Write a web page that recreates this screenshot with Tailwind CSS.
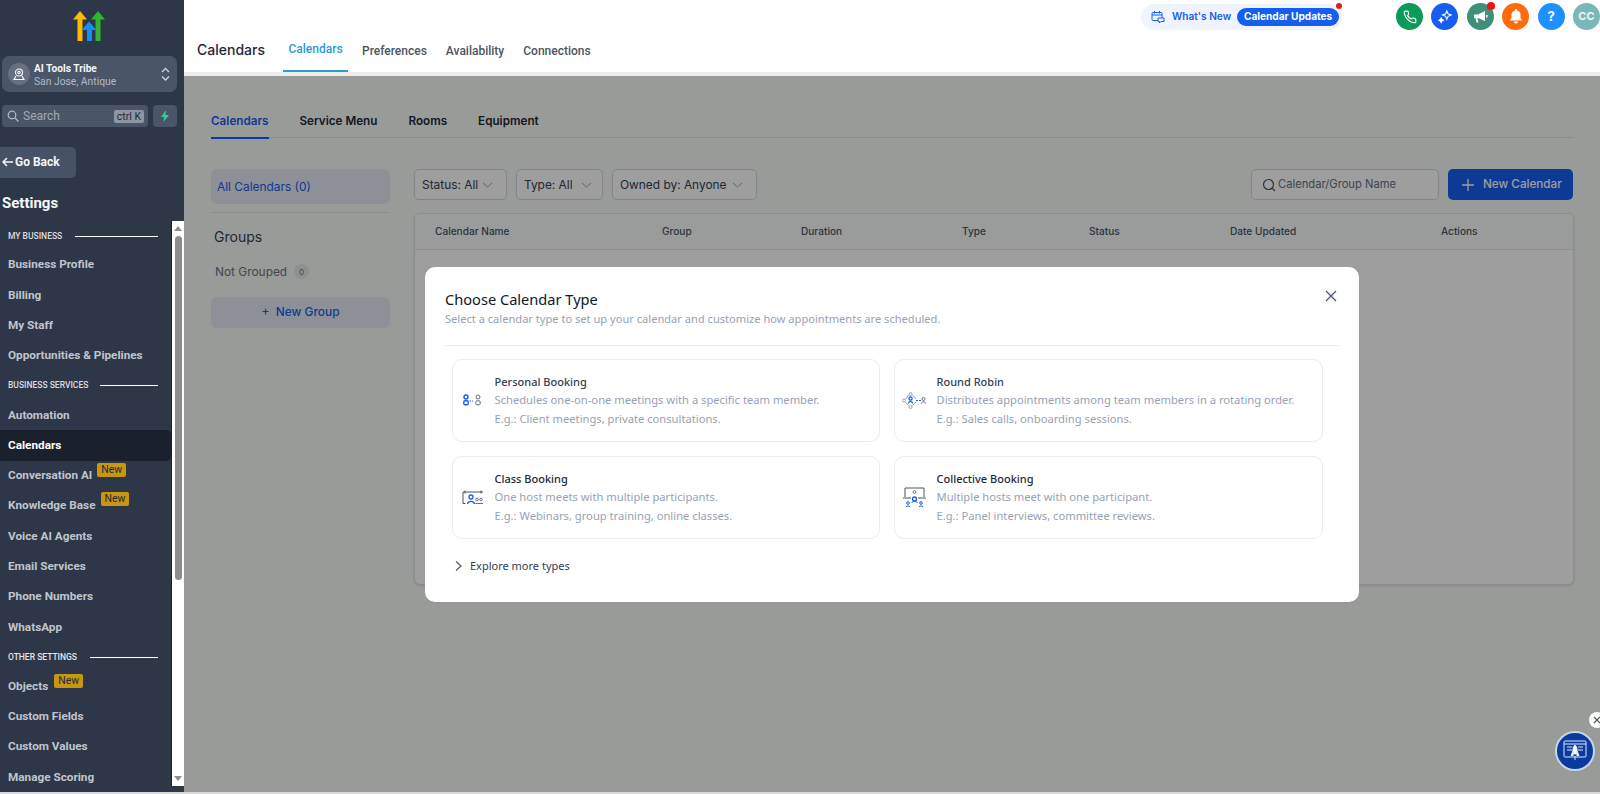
<!DOCTYPE html>
<html><head><meta charset="utf-8"><script src="https://cdn.jsdelivr.net/npm/@tailwindcss/browser@4"></script></head>
<body class="m-0 w-[1600px] h-[794px] overflow-hidden bg-[#d9d9d9] font-['Inter',sans-serif]">
<div class="flex h-[792px]">
<!-- Sidebar -->
<aside class="w-[184px] h-full shrink-0 bg-[#2d3748] flex flex-col font-['Roboto',sans-serif] text-white">
  <div class="h-[56px] flex justify-center pt-[11px] pr-[4px]">
    <svg width="36" height="31" viewBox="0 0 36 31"><path d="M1 8.500 8 0l7 8.500h-4.500V30h-5V8.500z" fill="#fbbc05"/><path d="M19 8.500 26 0l7 8.500h-4.500V30h-5V8.500z" fill="#2fb52f"/><path d="M9.500 19 17 10.500 24.500 19H20v11h-5V19z" fill="#188bf6"/></svg>
  </div>
  <div class="mx-[2px] w-[175px] h-[36px] rounded-[7px] bg-[#4a5568] flex items-center pl-[6px] pr-[7px]">
    <div class="w-[22px] h-[22px] rounded-full bg-[#667080] flex items-center justify-center mr-[4px]">
      <svg width="12" height="13" viewBox="0 0 12 13" fill="none" stroke="#fff" stroke-width="1.100"><circle cx="6" cy="4.500" r="3.500"/><circle cx="6" cy="4.500" r="1.200"/><path d="M3 8 1 11.500h10L9 8"/></svg>
    </div>
    <div class="flex-1 leading-[13px] pt-[1px]">
      <div class="text-[10.200px] font-bold text-[#f4f5f7]">AI Tools Tribe</div>
      <div class="text-[10.300px] text-[#b4bac4]">San Jose, Antique</div>
    </div>
    <svg width="9" height="14" viewBox="0 0 9 14" fill="none" stroke="#d0d4da" stroke-width="1.300"><path d="M1 5l3.500-3.500L8 5M1 9.500 4.500 13 8 9.500"/></svg>
  </div>
  <div class="mt-[13px] flex items-center gap-[5px] pl-[2px]">
    <div class="w-[146px] h-[22px] rounded-[4px] bg-[#4a5568] flex items-center pl-[5px] pr-[4px]">
      <svg width="12" height="12" viewBox="0 0 12 12" fill="none" stroke="#b4bac4" stroke-width="1.200"><circle cx="5" cy="5" r="3.800"/><path d="m8 8 3.500 3.500"/></svg>
      <span class="ml-[4px] text-[12px] flex-1 text-[#a4abb6]">Search</span>
      <span class="bg-[#8e96a3] text-[#1f2937] text-[10.500px] leading-[13px] px-[3px] rounded-[2px]">ctrl K</span>
    </div>
    <div class="w-[24px] h-[22px] rounded-[4px] bg-[#4a5568] flex items-center justify-center">
      <svg width="10" height="12" viewBox="0 0 10 12"><path d="M6 0 1 7h3L3.500 12 9 5H5.500z" fill="#37ca8f"/></svg>
    </div>
  </div>
  <div class="mt-[20px] w-[76px] h-[31px] rounded-r-[5px] bg-[#465367] flex items-center pl-[2px] pb-[1px] text-[12px] font-bold text-[#f4f5f7]">
    <svg width="11" height="10" viewBox="0 0 11 10" fill="none" stroke="#f4f5f7" stroke-width="1.500" class="mr-[2px]"><path d="M5 1 1 5l4 4M1 5h10"/></svg>Go Back
  </div>
  <div class="mt-[15px] h-[20px] pl-[2px] text-[15px] font-bold leading-[20px] text-[#f7f8f9]">Settings</div>
  <div class="mt-[8px] flex h-[565px] text-[#c0c5cc] text-[11.750px] font-bold">
    <nav class="w-[171px] overflow-hidden pt-[1px]">
      <div class="h-[28px] flex items-center pl-[8px] pr-[13px] gap-[13px] text-[8.500px] font-medium text-[#d9dce1]"><span class="whitespace-nowrap">MY BUSINESS</span><span class="flex-1 h-px bg-white"></span></div>
      <div class="h-[30.300px] flex items-center pl-[8px]">Business Profile</div>
      <div class="h-[30.300px] flex items-center pl-[8px]">Billing</div>
      <div class="h-[30.300px] flex items-center pl-[8px]">My Staff</div>
      <div class="h-[30.300px] flex items-center pl-[8px]">Opportunities &amp; Pipelines</div>
      <div class="h-[29px] flex items-center pl-[8px] pr-[13px] gap-[12px] text-[8.500px] font-medium text-[#d9dce1]"><span class="whitespace-nowrap">BUSINESS SERVICES</span><span class="flex-1 h-px bg-white"></span></div>
      <div class="h-[30.300px] flex items-center pl-[8px]">Automation</div>
      <div class="h-[30.300px] flex items-center pl-[8px] bg-[#1a202c] rounded-r-[5px] text-white">Calendars</div>
      <div class="h-[30.300px] flex items-center pl-[8px]">Conversation AI<span class="ml-[5px] -mt-[11px] h-[14px] px-[4px] rounded-[2px] bg-[#c9970f] text-[#1f2937] text-[10.500px] font-normal leading-[14px]">New</span></div>
      <div class="h-[30.300px] flex items-center pl-[8px]">Knowledge Base<span class="ml-[5px] -mt-[14px] h-[14px] px-[4px] rounded-[2px] bg-[#c9970f] text-[#1f2937] text-[10.500px] font-normal leading-[14px]">New</span></div>
      <div class="h-[30.300px] flex items-center pl-[8px]">Voice AI Agents</div>
      <div class="h-[30.300px] flex items-center pl-[8px]">Email Services</div>
      <div class="h-[30.300px] flex items-center pl-[8px]">Phone Numbers</div>
      <div class="h-[30.300px] flex items-center pl-[8px]">WhatsApp</div>
      <div class="h-[29px] flex items-center pl-[8px] pr-[13px] gap-[13px] text-[8.500px] font-medium text-[#e4e6ea]"><span class="whitespace-nowrap">OTHER SETTINGS</span><span class="flex-1 h-px bg-white"></span></div>
      <div class="h-[30.300px] flex items-center pl-[8px]">Objects<span class="ml-[6px] -mt-[12px] h-[14px] px-[4px] rounded-[2px] bg-[#c9970f] text-[#1f2937] text-[10.500px] font-normal leading-[14px]">New</span></div>
      <div class="h-[30.300px] flex items-center pl-[8px]">Custom Fields</div>
      <div class="h-[30.300px] flex items-center pl-[8px]">Custom Values</div>
      <div class="h-[30.300px] flex items-center pl-[8px]">Manage Scoring</div>
    </nav>
    <div class="w-[13px] h-full bg-white flex flex-col items-center pt-[5px] border-l border-[#1a202c]">
      <span class="w-0 h-0 border-x-[4px] border-x-transparent border-b-[5px] border-b-[#8f8f8f]"></span>
      <span class="mt-[5px] w-[7px] h-[344px] rounded-[4px] bg-[#8c8c8c]"></span>
      <span class="mt-auto mb-[5px] w-0 h-0 border-x-[4px] border-x-transparent border-t-[5px] border-t-[#8f8f8f]"></span>
    </div>
  </div>
</aside>
<div class="flex-1 flex flex-col min-w-0 relative">
  <!-- Header -->
  <header class="h-[76px] shrink-0 bg-white border-b-[4px] border-[#ececec] relative">
    <div class="flex h-[26px] mt-[4px] absolute left-[957px] top-0 w-[201px] rounded-full bg-[#eff4ff] items-center pl-[10px] text-[10.100px] font-semibold text-[#155eef] whitespace-nowrap">
      <svg width="14" height="14" viewBox="0 0 14 14" fill="none" stroke="#155eef" stroke-width="1"><rect x="1" y="2.500" width="10" height="8" rx="1"/><path d="M1 5h10M3.500 1v2.500M8.500 1v2.500"/><path d="M7 8h6v3.500H10L8.500 13v-1.500H7z" fill="#eff4ff"/></svg>
      <span class="ml-[7px]">What's New</span>
      <span class="ml-[6px] h-[18px] w-[102px] rounded-full bg-[#155eef] text-white font-bold flex items-center justify-center">Calendar Updates</span>
      <span class="absolute right-[0px] top-[-1px] w-[6px] h-[6px] rounded-full bg-[#d92020]"></span>
    </div>
    <div class="absolute left-[1212px] top-[3px] flex gap-[8.400px]">
      <div class="w-[27px] h-[27px] rounded-full bg-[#0b9a58] flex items-center justify-center"><svg width="14" height="14" viewBox="0 0 24 24" fill="none" stroke="#fff" stroke-width="2"><path d="M22 16.900v3a2 2 0 0 1-2.200 2 19.800 19.800 0 0 1-8.600-3.100 19.500 19.500 0 0 1-6-6A19.800 19.800 0 0 1 2.100 4.200 2 2 0 0 1 4.100 2h3a2 2 0 0 1 2 1.700l.5 2.800a2 2 0 0 1-.6 1.800L7.800 9.600a16 16 0 0 0 6 6l1.300-1.200a2 2 0 0 1 1.800-.6l2.800.5a2 2 0 0 1 1.700 2z"/></svg></div>
      <div class="w-[27px] h-[27px] rounded-full bg-[#155eef] flex items-center justify-center"><svg width="15" height="15" viewBox="0 0 16 16" fill="none" stroke="#fff" stroke-width="1.200"><path d="M10.500 2 11.800 5.200 15 6.500 11.800 7.800 10.500 11 9.200 7.800 6 6.500 9.200 5.200z"/><path d="M4.500 9.500l.9 1.600 1.600.9-1.600.9-.9 1.600-.9-1.600L2 12l1.600-.9z" fill="#fff"/></svg></div>
      <div class="relative w-[27px] h-[27px] rounded-full bg-[#3f9079] flex items-center justify-center"><svg width="15" height="14" viewBox="0 0 15 14" fill="#fff"><path d="M1 4.500h4L12 1v10L5 8H4.500l1 4.500h-2L2.500 8H1z"/><rect x="13" y="5" width="1.500" height="2.500"/></svg><span class="absolute right-[-1px] top-[-1px] w-[8px] h-[8px] rounded-full bg-[#f30f0f]"></span></div>
      <div class="w-[27px] h-[27px] rounded-full bg-[#ff6a0b] flex items-center justify-center"><svg width="14" height="15" viewBox="0 0 14 15" fill="#fff"><path d="M7 0a1 1 0 0 1 1 1v.6A4.500 4.500 0 0 1 11.500 6v3L13 11.500H1L2.500 9V6A4.500 4.500 0 0 1 6 1.600V1a1 1 0 0 1 1-1zM5 12.500h4a2 2 0 0 1-4 0z"/></svg></div>
      <div class="w-[27px] h-[27px] rounded-full bg-[#1e90ff] flex items-center justify-center text-white text-[13px] font-bold">?</div>
      <div class="w-[27px] h-[27px] rounded-full bg-[#7ab8b8] flex items-center justify-center text-[#eef6f6] text-[11px] font-bold">CC</div>
    </div>
    <div class="flex items-center h-[72px] pt-[27px] pl-[13px]">
      <span class="text-[14px] font-medium text-[#1f2937] w-[86px]">Calendars</span>
      <div class="flex h-[45px] text-[12px] font-medium text-[#4b5563] font-['Roboto',sans-serif]">
        <span class="h-full w-[65px] justify-center flex items-center pt-[1px] border-b-2 border-[#2b9ad8] text-[#2b9ad8]">Calendars</span>
        <span class="ml-[14px] flex items-center pt-[2px]">Preferences</span>
        <span class="ml-[19px] flex items-center pt-[2px]">Availability</span>
        <span class="ml-[19px] flex items-center pt-[2px]">Connections</span>
      </div>
    </div>
  </header>
  <!-- Main -->
  <main class="flex-1 relative bg-[#f7faf7] px-[27px] pt-[37px] pr-[26px]">
    <div class="flex h-[25px] border-b border-[#dfe3ea] text-[11.700px] font-semibold text-[#1f2937] gap-[31px]">
      <span class="border-b-2 border-[#155eef] text-[#155eef] h-[26px]">Calendars</span>
      <span>Service Menu</span><span>Rooms</span><span>Equipment</span>
    </div>
    <div class="flex mt-[31px]">
      <div class="w-[179px] shrink-0">
        <div class="h-[35px] rounded-[6px] bg-[#e6e9f5] flex items-center pl-[6px] text-[11.900px] text-[#155eef]">All Calendars (0)</div>
        <div class="mt-[8px] h-px bg-[#e5e7eb]"></div>
        <div class="mt-[14px] pl-[3px] text-[14px] text-[#374151] leading-[20px]">Groups</div>
        <div class="mt-[16px] pl-[4px] flex items-center text-[11.900px] text-[#6b7280]">Not Grouped<span class="ml-[7px] w-[15px] h-[15px] rounded-full bg-[#e5e7eb] text-[8px] flex items-center justify-center">0</span></div>
        <div class="mt-[16px] h-[31px] rounded-[6px] bg-[#e6e9f5] flex items-center justify-center text-[11.900px] font-medium text-[#155eef]">+ &nbsp;New Group</div>
      </div>
      <div class="ml-[24px] flex-1 min-w-0">
        <div class="flex h-[31px] text-[11.900px] text-[#374151] gap-[9px]">
          <div class="w-[93px] rounded-[5px] border border-[#d0d5dd] bg-white flex items-center justify-between pl-[7px] pr-[13px]">Status: All<svg width="11" height="6" viewBox="0 0 11 6" fill="none" stroke="#98a2b3"><path d="m1 1 4.500 4L10 1"/></svg></div>
          <div class="w-[87px] rounded-[5px] border border-[#d0d5dd] bg-white flex items-center justify-between pl-[7px] pr-[10px]">Type: All<svg width="11" height="6" viewBox="0 0 11 6" fill="none" stroke="#98a2b3"><path d="m1 1 4.500 4L10 1"/></svg></div>
          <div class="w-[145px] rounded-[5px] border border-[#d0d5dd] bg-white flex items-center justify-between pl-[7px] pr-[13px]">Owned by: Anyone<svg width="11" height="6" viewBox="0 0 11 6" fill="none" stroke="#98a2b3"><path d="m1 1 4.500 4L10 1"/></svg></div>
          <div class="ml-auto w-[188px] rounded-[5px] border border-[#d0d5dd] bg-white flex items-center pl-[10px] text-[11.200px] text-[#667085]"><svg width="14" height="14" viewBox="0 0 14 14" fill="none" stroke="#475467" stroke-width="1.200"><circle cx="6.500" cy="6.500" r="5"/><path d="m10.200 10.200 2.800 2.800"/></svg><span class="ml-[2px]">Calendar/Group Name</span></div>
          <div class="w-[125px] mr-[1px] rounded-[5px] bg-[#155eef] flex items-center pl-[14px] text-[11.700px] text-white font-medium"><svg width="12" height="12" viewBox="0 0 12 12" stroke="#fff" stroke-width="1.300"><path d="M6 0v12M0 6h12"/></svg><span class="ml-[9px]">New Calendar</span></div>
        </div>
        <div class="mt-[13px] h-[372px] rounded-[6px] border border-[#e0e3e8] bg-white shadow-sm overflow-hidden">
          <div class="h-[36px] bg-[#f9fafb] border-b border-[#e5e7eb] pl-[20px] grid grid-cols-[227px_139px_161px_127px_141px_211px_1fr] items-center text-[10.100px] font-medium text-[#475467]">
            <span>Calendar Name</span><span>Group</span><span>Duration</span><span>Type</span><span>Status</span><span>Date Updated</span><span>Actions</span>
          </div>
        </div>
      </div>
    </div>
    <!-- Overlay -->
    <div class="absolute inset-0 bg-[#000]/38"></div>
    <!-- Modal -->
    <div class="absolute left-[241px] top-[191px] w-[934px] h-[335px] rounded-[10px] bg-white px-[20px] pt-[22px] font-['Noto_Sans',sans-serif]">
      <div class="text-[14.600px] leading-[20px] text-[#101828]">Choose Calendar Type</div>
      <div class="mt-[2px] text-[11.100px] leading-[16px] text-[#98a2b3]">Select a calendar type to set up your calendar and customize how appointments are scheduled.</div>
      <svg class="absolute right-[22px] top-[23px]" width="12" height="12" viewBox="0 0 12 12" stroke="#475467" stroke-width="1.200"><path d="m1 1 10 10M11 1 1 11"/></svg>
      <div class="mt-[18px] h-px bg-[#eaecf0]"></div>
      <div class="ml-[7px] mt-[13px] grid grid-cols-[428px_429px] gap-x-[14px] gap-y-[14px]">
        <div class="h-[83px] rounded-[10px] border border-[#eaecf0] flex items-center pl-[9px]">
          <svg class="w-[21px] h-[21px] shrink-0" viewBox="0 0 21 21" fill="none"><g stroke="#155eef" stroke-width="1.400"><circle cx="4" cy="7" r="2"/><rect x="1.800" y="10.800" width="4.400" height="4" rx="1.200"/><path d="M7.500 11h3.500" stroke-width="1" stroke-dasharray="1.500 1"/></g><g stroke="#667085" stroke-width="1"><circle cx="16" cy="7" r="2"/><rect x="13.800" y="10.800" width="4.400" height="4" rx="1"/></g></svg>
          <div class="ml-[11.500px] text-[11.200px] leading-[18.300px] text-[#98a2b3]"><div class="text-[#344054] text-[11px] font-medium">Personal Booking</div><div>Schedules one-on-one meetings with a specific team member.</div><div>E.g.: Client meetings, private consultations.</div></div>
        </div>
        <div class="h-[83px] rounded-[10px] border border-[#eaecf0] flex items-center pl-[7px]">
          <svg class="w-[25px] h-[21px] shrink-0" viewBox="0 0 25 21" fill="none"><circle cx="8.500" cy="4" r="1.500" stroke="#98a2b3"/><circle cx="8.500" cy="17" r="1.500" stroke="#98a2b3"/><circle cx="2" cy="10.500" r="1.500" stroke="#98a2b3"/><path d="M10.500 5 14 9M6.500 5 3.500 9M3.500 12l3 3.500M14 12l-3.500 3.500" stroke="#98a2b3"/><circle cx="8.500" cy="8.500" r="1.600" stroke="#155eef" stroke-width="1.300"/><path d="M6.300 13.500c.5-2.800 4-2.800 4.400 0" stroke="#155eef" stroke-width="1.300"/><path d="M14 10.500h5" stroke="#155eef" stroke-dasharray="2 1"/><circle cx="21.500" cy="9" r="1.500" stroke="#667085"/><path d="M19.500 13.500c.4-2.500 3.600-2.500 4 0" stroke="#667085"/></svg>
          <div class="ml-[9.500px] text-[11.200px] leading-[18.300px] text-[#98a2b3]"><div class="text-[#344054] text-[11px] font-medium">Round Robin</div><div>Distributes appointments among team members in a rotating order.</div><div>E.g.: Sales calls, onboarding sessions.</div></div>
        </div>
        <div class="h-[83px] rounded-[10px] border border-[#eaecf0] flex items-center pl-[9px]">
          <svg class="w-[22px] h-[21px] shrink-0" viewBox="0 0 22 21" fill="none" stroke-width="1"><path d="M3.500 16.500H1V5h20" stroke="#475467"/><path d="M3 3.500v3M19 3.500v3" stroke="#475467"/><circle cx="9" cy="10" r="2" stroke="#155eef" stroke-width="1.300"/><path d="M5.500 17c.5-3.500 6.500-3.500 7 0" stroke="#155eef" stroke-width="1.300"/><circle cx="15" cy="12.500" r="1.300" stroke="#667085"/><circle cx="19" cy="12.500" r="1.300" stroke="#667085"/><path d="M13.500 16.500H21" stroke="#667085"/></svg>
          <div class="ml-[10.500px] text-[11.200px] leading-[18.300px] text-[#98a2b3]"><div class="text-[#1d2939] text-[11px] font-medium">Class Booking</div><div>One host meets with multiple participants.</div><div>E.g.: Webinars, group training, online classes.</div></div>
        </div>
        <div class="h-[83px] rounded-[10px] border border-[#eaecf0] flex items-center pl-[7px]">
          <svg class="w-[25px] h-[21px] shrink-0" viewBox="0 0 25 21" fill="none" stroke-width="1"><path d="M3 10V1h19v9" stroke="#475467"/><path d="M1 11h8M16 11h8" stroke="#475467"/><circle cx="12.500" cy="5" r="1.400" stroke="#667085"/><circle cx="12.500" cy="12" r="2" stroke="#155eef" stroke-width="1.300"/><path d="M9.500 16c.5-2 5.500-2 6 0" stroke="#155eef"/><circle cx="6" cy="16" r="1.300" stroke="#155eef"/><circle cx="19" cy="16" r="1.300" stroke="#155eef"/><path d="M4 20c.4-1.500 3.600-1.500 4 0M17 20c.4-1.500 3.600-1.500 4 0" stroke="#155eef"/></svg>
          <div class="ml-[9.500px] text-[11.200px] leading-[18.300px] text-[#98a2b3]"><div class="text-[#1d2939] text-[11px] font-medium">Collective Booking</div><div>Multiple hosts meet with one participant.</div><div>E.g.: Panel interviews, committee reviews.</div></div>
        </div>
      </div>
      <div class="mt-[19px] ml-[9px] flex items-center text-[11px] text-[#344054]"><svg width="9" height="12" viewBox="0 0 9 12" fill="none" stroke="#475467" stroke-width="1.100"><path d="m2 1.500 5 4.500-5 4.500"/></svg><span class="ml-[7px]">Explore more types</span></div>
    </div>
    <!-- Floating widget -->
    <div class="absolute left-[1371px] top-[655px] w-[40px] h-[40px] rounded-full bg-[#0a3a9e] border-2 border-[#c7d4ea] flex items-center justify-center">
      <svg width="28" height="28" viewBox="0 0 28 28" fill="none" stroke="#dbe6f7" stroke-width="1"><rect x="3" y="4" width="22" height="16" rx="1"/><path d="M3 7h22M6 10h5M6 13h5M17 10h5M17 13h5"/><path d="M14 8c2.500 2 2.500 6 1.500 9h-3C11.500 14 11.500 10 14 8z" fill="#fff"/><path d="M12 14l-2 4.500h2.500M16 14l2 4.500h-2.500" fill="#fff"/><path d="M14 19v4"/></svg>
    </div>
    <div class="absolute left-[1405px] top-[636px] w-[16px] h-[16px] rounded-full bg-white flex items-center justify-center">
      <svg width="8" height="8" viewBox="0 0 8 8" stroke="#555" stroke-width="1.200"><path d="m1 1 6 6M7 1 1 7"/></svg>
    </div>
  </main>
</div>
</div>
</body></html>
